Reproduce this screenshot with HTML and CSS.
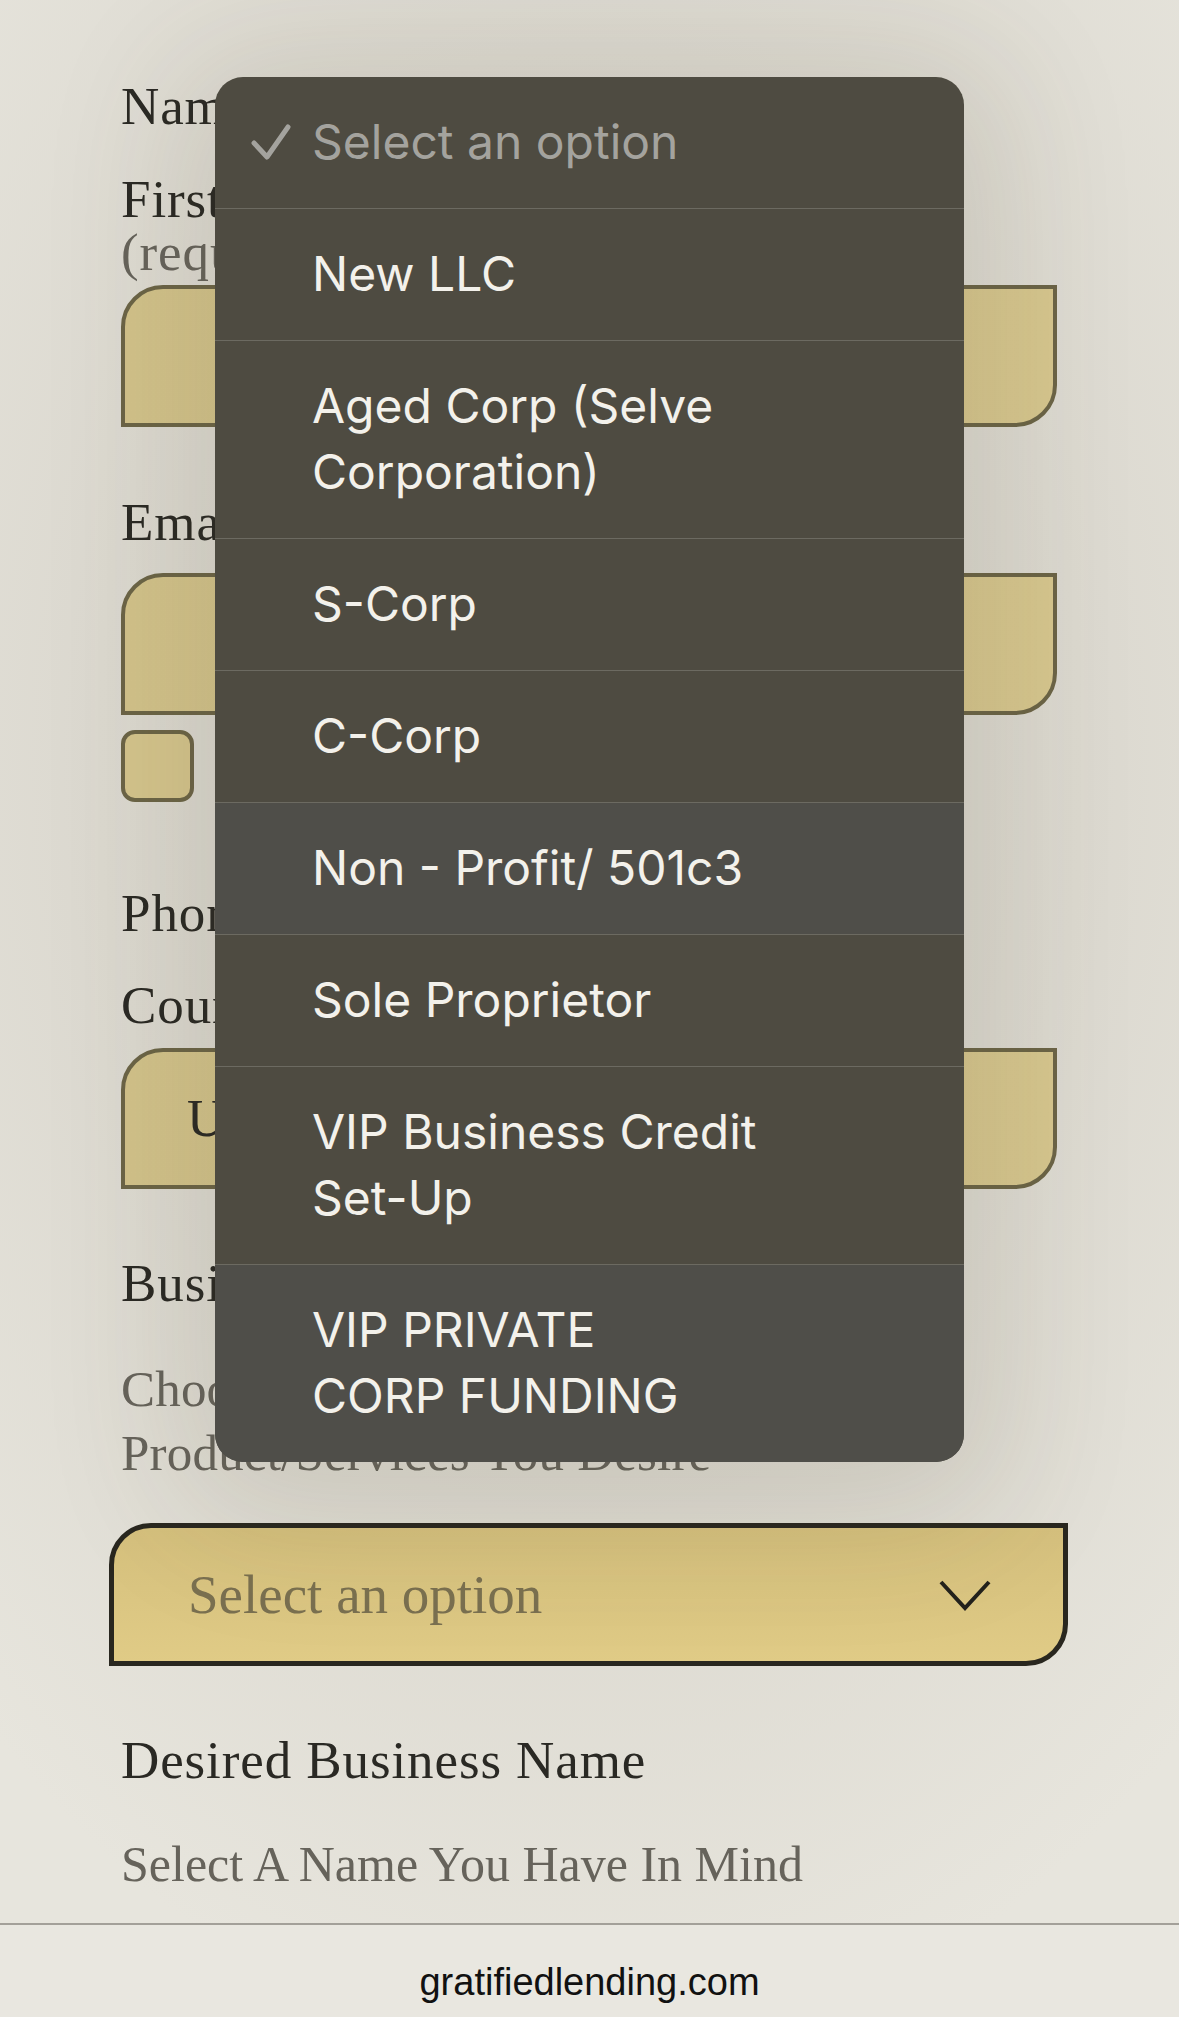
FILE: index.html
```html
<!DOCTYPE html>
<html lang="en">
<head>
    <meta charset="UTF-8">
    <meta name="viewport" content="width=device-width, initial-scale=1.0">
    <title>Business Services</title>
    <link rel="stylesheet" href="styles.css">
</head>
<body>
    <div class="page">
        <form class="lead-form">
            <div class="field-title">Name</div>
            <label class="field-label first-label" for="first">First<br><span class="muted">(required)</span></label>
            <input type="text" id="first" class="text-input first-input">

            <label class="field-title email-label" for="email">Email</label>
            <input type="email" id="email" class="text-input email-input">
            <div class="check-row">
                <span class="check-box"></span>
            </div>

            <div class="field-title phone-label">Phone</div>
            <label class="field-title country-label" for="country">Country</label>
            <div class="text-input country-input" id="country">U</div>

            <div class="field-title business-label">Business</div>
            <p class="hint choose-hint">Choose<br>Product/Services You Desire</p>
            <div class="select-box">
                <span class="select-value">Select an option</span>
                <svg class="chevron" width="52" height="32" viewBox="0 0 52 32">
                    <polyline points="2,2 26,28 50,2" fill="none" stroke="#23221c" stroke-width="4"/>
                </svg>
            </div>

            <div class="field-title desired-label">Desired Business Name</div>
            <p class="hint name-hint">Select A Name You Have In Mind</p>
        </form>

        <footer class="site-footer">gratifiedlending.com</footer>

        <div class="option-menu">
            <div class="option placeholder">
                <span class="mark">
                    <svg width="40" height="36" viewBox="0 0 40 36">
                        <polyline points="3,19 16,33 37,3" fill="none" stroke="#a4a39e" stroke-width="5" stroke-linecap="round" stroke-linejoin="round"/>
                    </svg>
                </span>
                <span class="label">Select an option</span>
            </div>
            <div class="option"><span class="mark"></span><span class="label">New LLC</span></div>
            <div class="option"><span class="mark"></span><span class="label">Aged Corp (Selve<br>Corporation)</span></div>
            <div class="option"><span class="mark"></span><span class="label">S-Corp</span></div>
            <div class="option"><span class="mark"></span><span class="label">C-Corp</span></div>
            <div class="option grey"><span class="mark"></span><span class="label">Non - Profit/ 501c3</span></div>
            <div class="option"><span class="mark"></span><span class="label">Sole Proprietor</span></div>
            <div class="option"><span class="mark"></span><span class="label">VIP Business Credit<br>Set-Up</span></div>
            <div class="option grey last"><span class="mark"></span><span class="label">VIP PRIVATE<br>CORP FUNDING</span></div>
        </div>
    </div>
</body>
</html>
```

FILE: styles.css
```css
body {
    margin: 0;
    padding: 0;
    background-color: #e7e5dd;
    font-family: "Liberation Serif", "DejaVu Serif", serif;
    color: #2a2924;
}
.page {
    position: relative;
    width: 1179px;
    height: 2017px;
    overflow: hidden;
    background: radial-gradient(ellipse 900px 1300px at 590px 760px, #d3d0c6 0%, #dcd9d0 55%, #e7e5dd 100%);
}
.lead-form {
    display: flex;
    flex-direction: column;
    padding: 76px 122px 0 121px;
}
.field-title,
.field-label {
    display: block;
    font-size: 53px;
    line-height: 60px;
    letter-spacing: 0.9px;
    color: #2a2924;
}
.first-label {
    line-height: 53px;
    margin-top: 37px;
}
.muted {
    color: #66635b;
}
.text-input {
    box-sizing: border-box;
    width: 100%;
    height: 142px;
    margin: 0;
    border: 4px solid #6b6446;
    border-radius: 42px 0 42px 0;
    background: linear-gradient(90deg, #d2c28a, #d6c68e);
    font-family: "Liberation Serif", serif;
    font-size: 53px;
    color: #2a2924;
}
.first-input {
    margin-top: 6px;
}
.email-label {
    margin-top: 65px;
}
.email-input {
    margin-top: 21px;
}
.check-row {
    display: flex;
    align-items: center;
    margin-top: 15px;
}
.check-box {
    box-sizing: border-box;
    width: 73px;
    height: 72px;
    border: 4px solid #6b6446;
    border-radius: 14px;
    background: #d4c48c;
}
.phone-label {
    margin-top: 81px;
}
.country-label {
    margin-top: 32px;
}
.country-input {
    margin-top: 13px;
    height: 141px;
    padding-left: 62px;
    line-height: 133px;
}
.business-label {
    margin-top: 64px;
}
.hint {
    margin: 0;
    font-size: 51px;
    line-height: 64px;
    letter-spacing: 0.2px;
    color: #66635b;
}
.choose-hint {
    margin-top: 44px;
}
.select-box {
    box-sizing: border-box;
    display: flex;
    align-items: center;
    justify-content: space-between;
    height: 143px;
    margin: 38px -11px 0 -12px;
    padding: 0 72px 0 74px;
    border: 5px solid #29271f;
    border-radius: 42px 0 42px 0;
    background: linear-gradient(180deg, #d5c07d, #e0cb86);
}
.select-value {
    font-size: 55px;
    color: #7a7050;
}
.chevron {
    display: block;
    margin-top: 2px;
}
.desired-label {
    margin-top: 64px;
}
.name-hint {
    margin-top: 44px;
    line-height: 60px;
    font-size: 50px;
    letter-spacing: 0;
}
.site-footer {
    margin-top: 29px;
    border-top: 2px solid #a3a099;
    padding-top: 32px;
    text-align: center;
    font-family: "Liberation Sans", Arial, sans-serif;
    font-size: 38px;
    line-height: 50px;
    color: #111;
    background: #e9e7e0;
    height: 100px;
}
/* native picker overlay */
.option-menu {
    position: absolute;
    top: 77px;
    left: 215px;
    width: 749px;
    border-radius: 28px;
    overflow: hidden;
    background: #4e4b41;
    box-shadow: 0 20px 140px 40px rgba(70, 64, 45, 0.12);
    font-family: Inter, "Noto Sans", sans-serif;
}
.option {
    display: flex;
    padding: 32px 0 33px;
    border-bottom: 1px solid #6c6a61;
    font-size: 48px;
    line-height: 66px;
    color: #f3f1eb;
}
.option.grey {
    background: #4f4e49;
}
.option.last {
    border-bottom: none;
}
.option .mark {
    flex: 0 0 97px;
    box-sizing: border-box;
    padding-left: 36px;
    display: flex;
    align-items: center;
}
.option .mark svg {
    display: block;
}
.placeholder {
    color: #a4a39e;
}
```
